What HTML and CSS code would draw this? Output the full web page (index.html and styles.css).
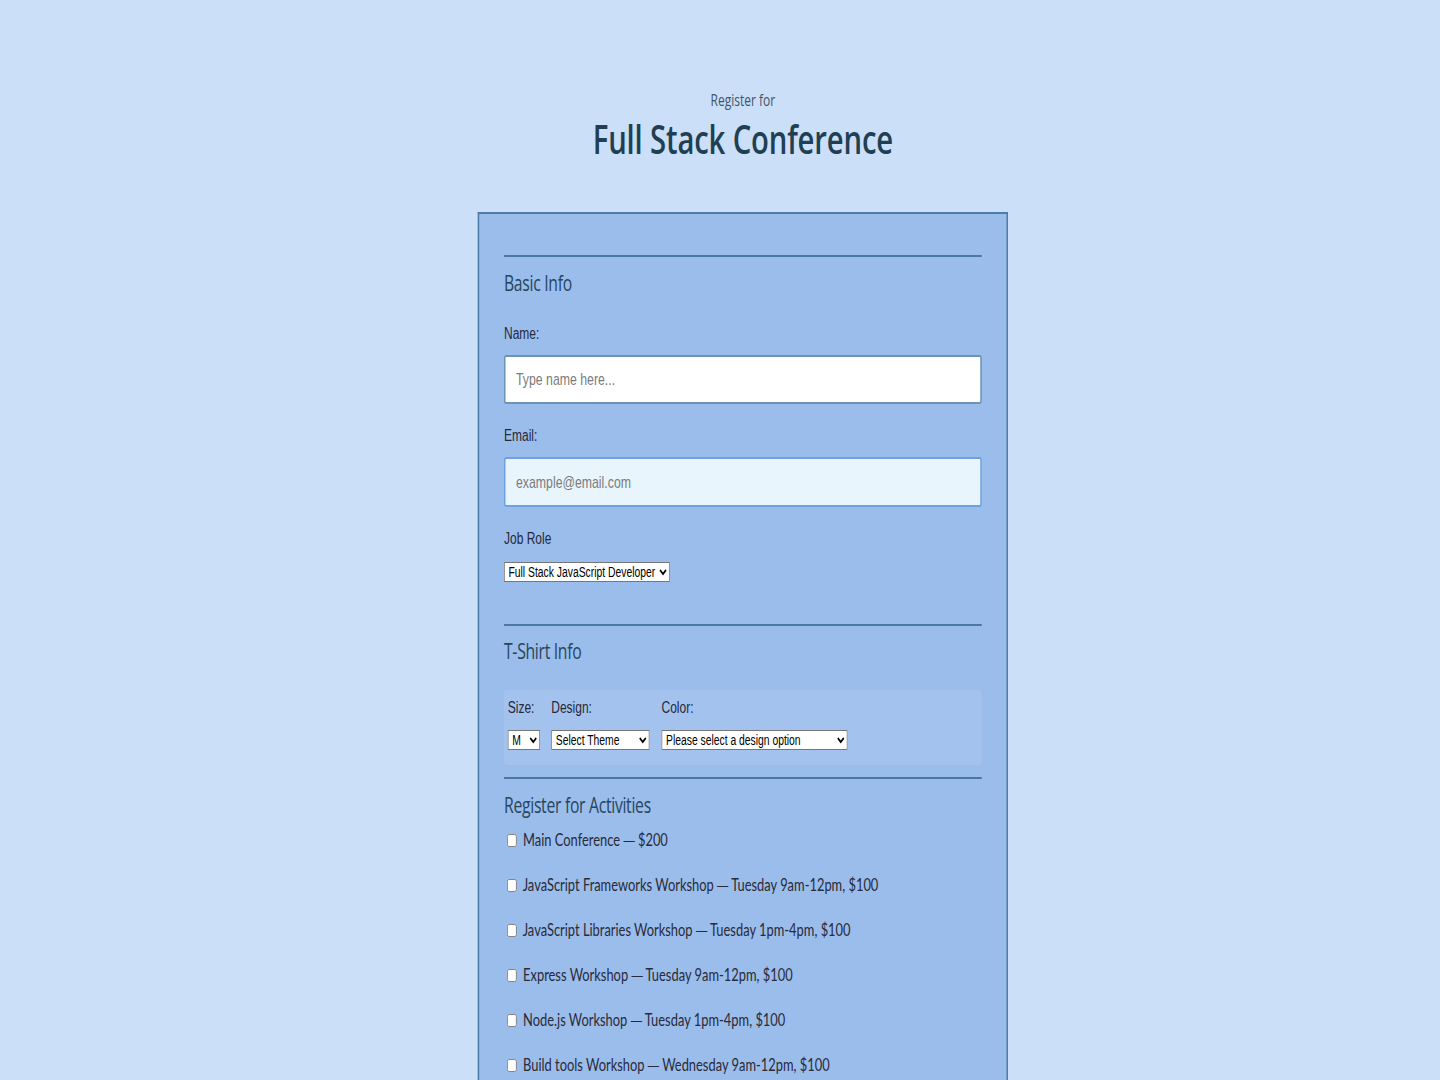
FILE: index.html
```html
<!DOCTYPE html>
<html lang="en">
<head>
<meta charset="utf-8">
<title>Full Stack Conference</title>
<link rel="stylesheet" href="styles.css">
</head>
<body>
<div class="page">
  <header class="header">
    <span class="pre-title">Register for</span>
    <h1 class="title">Full Stack Conference</h1>
  </header>
  <form class="form">
    <fieldset class="section basic">
      <legend class="legend">Basic Info</legend>
      <label class="label label-name" for="name">Name:</label>
      <input class="text-input name-input" id="name" type="text" placeholder="Type name here...">
      <label class="label label-email" for="email">Email:</label>
      <input class="text-input email-input" id="email" type="email" placeholder="example@email.com">
      <label class="label label-job" for="title">Job Role</label>
      <select class="select job-select" id="title">
        <option>Full Stack JavaScript Developer</option>
      </select>
    </fieldset>
    <fieldset class="section shirt">
      <legend class="legend">T-Shirt Info</legend>
      <div class="shirt-box">
        <div class="shirt-col col-size">
          <label class="label" for="size">Size:</label>
          <select class="select size-select" id="size"><option>M</option></select>
        </div>
        <div class="shirt-col col-design">
          <label class="label" for="design">Design:</label>
          <select class="select design-select" id="design"><option>Select Theme</option></select>
        </div>
        <div class="shirt-col col-color">
          <label class="label" for="color">Color:</label>
          <select class="select color-select" id="color"><option>Please select a design option</option></select>
        </div>
      </div>
    </fieldset>
    <fieldset class="section activities">
      <legend class="legend">Register for Activities</legend>
      <label class="activity"><input type="checkbox" name="all"> Main Conference <span class="dash">—</span> $200</label>
      <label class="activity"><input type="checkbox" name="js-frameworks"> JavaScript Frameworks Workshop <span class="dash">—</span> Tuesday 9am-12pm, $100</label>
      <label class="activity"><input type="checkbox" name="js-libs"> JavaScript Libraries Workshop <span class="dash">—</span> Tuesday 1pm-4pm, $100</label>
      <label class="activity"><input type="checkbox" name="express"> Express Workshop <span class="dash">—</span> Tuesday 9am-12pm, $100</label>
      <label class="activity"><input type="checkbox" name="node"> Node.js Workshop <span class="dash">—</span> Tuesday 1pm-4pm, $100</label>
      <label class="activity"><input type="checkbox" name="build-tools"> Build tools Workshop <span class="dash">—</span> Wednesday 9am-12pm, $100</label>
      <label class="activity"><input type="checkbox" name="npm"> npm Workshop <span class="dash">—</span> Wednesday 1pm-4pm, $100</label>
    </fieldset>
  </form>
</div>
</body>
</html>
```

FILE: styles.css
```css
html, body {
  margin: 0;
  padding: 0;
}
body {
  background: #cbdff9;
  overflow: hidden;
  width: 1440px;
  height: 1080px;
}
.page {
  width: 1920px;
  box-sizing: border-box;
  padding-left: 61px;
  transform: scaleX(0.75);
  transform-origin: 0 0;
  display: flex;
  flex-direction: column;
  align-items: center;
  font-family: "Liberation Sans", Arial, sans-serif;
}
.header {
  display: flex;
  flex-direction: column;
  align-items: center;
  padding-top: 89px;
}
.pre-title {
  font-family: "Open Sans", sans-serif;
  font-size: 16px;
  line-height: 22px;
  color: #3e5566;
}
.title {
  margin: 6px 0 0;
  font-family: "Open Sans", sans-serif;
  font-weight: 600;
  font-size: 39px;
  line-height: 44px;
  color: #213f52;
  letter-spacing: -0.2px;
}
.form {
  margin-top: 51px;
  width: 637px;
  padding: 0 33px;
  background: #9abdec;
  border: 2px solid #4d7ca6;
  border-bottom: none;
  height: 900px;
}
.section {
  margin: 0;
  padding: 0;
  border: none;
  border-top: 2px solid #4c78a0;
  min-width: 0;
  display: flex;
  flex-direction: column;
  align-items: flex-start;
}
.basic {
  margin-top: 41px;
  padding-bottom: 42px;
}
.legend {
  padding: 0;
  float: left;
  width: 100%;
  font-family: "Open Sans", sans-serif;
  font-weight: 500;
  font-size: 21px;
  line-height: 30px;
  color: #27465b;
  margin-top: 11px;
  letter-spacing: -0.4px;
}
.shirt .legend { margin-top: 10px; }
.label {
  font-size: 16px;
  line-height: 20px;
  color: #27283a;
}
.label-name { margin-top: 26px; }
.label-email { margin-top: 22px; }
.label-job { margin-top: 22px; }
.text-input {
  box-sizing: border-box;
  width: 100%;
  margin-top: 11px;
  font-family: "Liberation Sans", Arial, sans-serif;
  font-size: 16.4px;
  padding: 0 14px;
  border-radius: 3px;
  outline: none;
}
.text-input::placeholder {
  color: #7b7b7b;
}
.name-input {
  height: 49px;
  background: #ffffff;
  border: 2px solid #6a93b4;
}
.email-input {
  height: 50px;
  background: #e8f5fd;
  border: 2px solid #6fa1e2;
}
.select {
  font-family: "Liberation Sans", Arial, sans-serif;
  font-size: 13.8px;
  height: 20px;
  background: #fff;
  color: #000;
  border: 1px solid #767676;
  border-radius: 0;
  padding: 0 0 0 1px;
}
.job-select {
  margin-top: 13px;
  width: 221px;
}
.shirt {
  padding-bottom: 0;
}
.shirt-box {
  box-sizing: border-box;
  width: 100%;
  margin-top: 24px;
  height: 75px;
  padding: 8px 5px 0;
  background: #a3c3ee;
  border-radius: 4px;
  display: flex;
  gap: 15px;
}
.shirt-col {
  display: flex;
  flex-direction: column;
  gap: 12px;
  align-items: flex-start;
}
.size-select { width: 43px; }
.design-select { width: 131px; }
.color-select { width: 248px; }
.col-color { margin-left: 1px; }
.activities {
  margin-top: 12px;
}
.activities .legend {
  margin-top: 11px;
  margin-bottom: 10px;
}
.activity {
  display: flex;
  align-items: center;
  font-family: Lato, sans-serif;
  font-size: 17.2px;
  line-height: 20px;
  color: #2a2a38;
  margin-bottom: 25px;
  white-space: pre;
}
.dash {
  font-family: "Liberation Sans", Arial, sans-serif;
  font-size: 15px;
}
.activity input {
  margin: 0 4px 0 4px;
  width: 13px;
  height: 13px;
}
```
